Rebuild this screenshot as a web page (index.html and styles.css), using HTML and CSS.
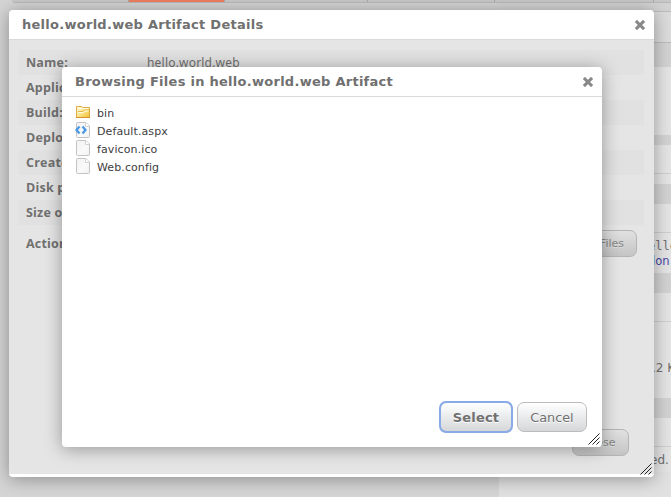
FILE: index.html
```html
<!DOCTYPE html>
<html lang="en">
<head>
<meta charset="utf-8">
<title>Artifact Details</title>
<link rel="stylesheet" href="styles.css">
</head>
<body>
<svg width="0" height="0" class="defs">
  <defs>
    <linearGradient id="gold" x1="0" y1="0" x2="1" y2="1"><stop offset="0" stop-color="#fffbe0"/><stop offset=".5" stop-color="#fae58a"/><stop offset="1" stop-color="#f0bd30"/></linearGradient>
    <linearGradient id="paper" x1="0" y1="0" x2="1" y2="1"><stop offset="0" stop-color="#f2f2f2"/><stop offset=".6" stop-color="#fafafa"/><stop offset="1" stop-color="#f0f0f0"/></linearGradient>
    <symbol id="x" viewBox="0 0 10 10"><path d="M2 2l6 6M8 2l-6 6" stroke="#888" stroke-width="3.1" stroke-linecap="square"/></symbol>
    <symbol id="grip" viewBox="0 0 12 12"><path d="M.5 11.5l11-11M4.500 11.5l7-7M8.500 11.5l3-3" stroke="#222" stroke-width="1"/></symbol>
    <symbol id="page" viewBox="0 0 16 16"><path d="M1.500 1.500q0-1 1-1H11l3.500 3.500v10.500q0 1-1 1h-11q-1 0-1-1z" fill="url(#paper)" stroke="#c3c3c3"/><path d="M10.500 .5v4h4" fill="#fff" stroke="#d2d2d2"/></symbol>
    <symbol id="folder" viewBox="0 0 16 16"><path d="M1.500 13.500v-11h5l1 1h7v10z" fill="url(#gold)" stroke="#dfaa45"/><path d="M3 7.500h5l1.500-1.500h4" stroke="#e5b84b" fill="none"/><path d="M3 8.500h5.500l1.500-1.500h3.500M3 4.500h10.500" stroke="#fffbe2" fill="none"/><path d="M1 13.500h14" stroke="#d9902e"/></symbol>
  </defs>
</svg>
<div class="app">
  <nav class="tabs"><span class="tab first"></span><span class="tab active"></span><span class="tab wide"></span><span class="tab mid"></span><span class="tab last"></span><span class="tab end"></span></nav>
  <div class="content">
    <main class="main"></main>
    <aside class="side">
      <div class="strip"></div>
      <div class="heading"></div>
      <div class="block b1"></div>
      <div class="bar small"></div>
      <div class="block b2"></div>
      <div class="bar"></div>
      <div class="block b3"><p class="mono">ello</p><p class="link">lon</p></div>
      <div class="bar"></div>
      <div class="block b4"><p>.2 K</p></div>
      <div class="bar"></div>
      <div class="block b5"><p>ed.</p></div>
    </aside>
  </div>
</div>

<section class="dialog details">
  <header><h1>hello.world.web Artifact Details</h1><svg class="close"><use href="#x"/></svg></header>
  <div class="body">
    <dl>
      <div><dt>Name:</dt><dd>hello.world.web</dd></div>
      <div><dt>Applic</dt></div>
      <div><dt>Build:</dt></div>
      <div><dt>Deploy</dt></div>
      <div><dt>Create</dt></div>
      <div><dt>Disk p</dt></div>
      <div><dt>Size o</dt></div>
    </dl>
    <div class="actions"><b>Action</b><button class="dim files">Files</button></div>
    <footer><button class="dim">Close</button></footer>
  </div>
  <svg class="grip"><use href="#grip"/></svg>
</section>

<section class="dialog browse">
  <header><h1>Browsing Files in hello.world.web Artifact</h1><svg class="close"><use href="#x"/></svg></header>
  <ul>
    <li><svg><use href="#folder"/></svg>bin</li>
    <li><svg><use href="#page"/><path d="M4.500 4.500L1.500 8l3 3.500M7.500 4.500l3 3.500-3 3.500" fill="none" stroke="#4a98e3" stroke-width="2.300"/></svg>Default.aspx</li>
    <li><svg><use href="#page"/></svg>favicon.ico</li>
    <li><svg><use href="#page"/></svg>Web.config</li>
  </ul>
  <footer><button class="select">Select</button><button>Cancel</button></footer>
  <svg class="grip"><use href="#grip"/></svg>
</section>
</body>
</html>
```
FILE: styles.css
```css
* { box-sizing: border-box; }
body { margin: 0; width: 671px; height: 497px; overflow: hidden; position: relative; background: #d5d5d5; color: #707070; font: 12px "DejaVu Sans", Verdana, sans-serif; }
h1, p, dl, dd, ul { margin: 0; padding: 0; }
svg { display: block; flex: none; }
.defs { position: absolute; }
.app { height: 497px; display: flex; flex-direction: column; }
.tabs { display: flex; height: 3px; margin-left: 12px; background: #c8c8c8; border-bottom: 1px solid #b9b9b9; border-radius: 0 0 0 6px; }
.tab { height: 2px; border-right: 1px solid #aaa; }
.first { width: 117px; }
.active { width: 96px; background: #ee7e60; }
.wide { width: 143px; }
.mid { width: 127px; }
.last { width: 159px; }
.end { flex: 1; border: 0; }
.content { flex: 1; display: flex; }
.main { width: 499px; }
.side { flex: 1; background: #e1e1e1; overflow: hidden; white-space: nowrap; }
.strip { height: 9px; background: #d3d3d3; border-bottom: 1px solid #bdbdbd; }
.heading { height: 31px; background: #dcdcdc; border-bottom: 1px solid #bdbdbd; }
.heading + .block { border-top: 24px solid #d3d3d3; }
.block { background: #e5e5e5; }
.bar { height: 20px; background: #d3d3d3; }
.small { height: 10px; }
.b1 { height: 92px; }
.b2, .b3, .b4, .b5 { background: linear-gradient(#cfcfcf, #cfcfcf) 0 28px / 100% 1px no-repeat #e5e5e5; }
.b2 { height: 39px; }
.b3 { height: 69px; padding: 34px 0 0 149px; }
.b4 { height: 105px; padding: 68px 0 0 153px; }
.b5 { height: 54px; padding: 35px 0 0 151px; }
.mono { font: 12px/16px "DejaVu Sans Mono", monospace; }
.link { margin-left: 4px; font-size: 11.500px; line-height: 15px; color: #4747a5; }

.dialog { position: absolute; display: flex; flex-direction: column; background: #fff; border-radius: 4px; box-shadow: 0 2px 18px rgba(0, 0, 0, .35); }
.details { left: 9px; top: 10px; width: 645px; height: 467px; }
.browse { left: 62px; top: 67px; width: 540px; height: 380px; }
.dialog header { display: flex; align-items: center; justify-content: space-between; height: 30px; padding: 0 8px 0 13px; border-bottom: 1px solid #dadada; }
.dialog h1 { padding-top: 1px; font-size: 13px; line-height: 16px; font-weight: bold; letter-spacing: .27px; white-space: nowrap; }
.close { width: 10px; height: 10px; margin-right: 1px; }
.body { height: 434px; padding: 10px; display: flex; flex-direction: column; background: #e5e5e5; }
dl div { display: flex; align-items: center; height: 25px; padding-left: 7px; }
dl div:nth-child(odd) { background: #e1e1e1; }
dt, .actions b { width: 121px; font: bold 12.500px "Open Sans", "Noto Sans", sans-serif; letter-spacing: .2px; white-space: nowrap; }
dd { font: 12px "Noto Sans", "Open Sans", sans-serif; letter-spacing: .2px; }
.actions { display: flex; align-items: center; justify-content: space-between; height: 27px; margin-top: 5px; padding: 0 7px; }
.body footer { display: flex; justify-content: flex-end; margin-top: auto; padding: 0 15px 8px; }
button { height: 30px; width: 70px; padding: 0; border: 1px solid #bcbcbc; border-radius: 7px; background: linear-gradient(#fff, #d5d7d9); color: #707070; font: 12.800px "DejaVu Sans", Verdana, sans-serif; text-shadow: 0 1px #fff; }
.dim { width: 57px; height: 27px; background: linear-gradient(#e1e1e1, #c4c4c4); border-color: #b5b5b5; color: #858585; font-size: 11px; text-shadow: 0 1px #ddd; }
.files { width: 98px; padding-right: 12px; text-align: right; }
.browse ul { flex: 1; list-style: none; padding: 7px 13px; color: #404040; font-size: 11px; letter-spacing: .1px; }
.browse li { display: flex; align-items: center; height: 18px; gap: 6px; }
.browse li svg { width: 16px; height: 16px; position: relative; top: -1px; }
.browse footer { display: flex; justify-content: flex-end; gap: 6px; padding: 0 15px 15px; }
.select { font-weight: bold; font-size: 13px; letter-spacing: .2px; outline: 2px solid #88aae8; outline-offset: -1px; border-radius: 6px; width: 72px; margin-right: -1px; }
.grip { position: absolute; right: 2px; bottom: 2px; width: 12px; height: 12px; }
```
